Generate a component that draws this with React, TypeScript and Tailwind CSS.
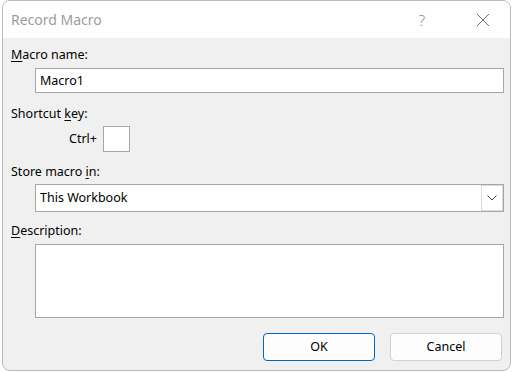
import React from "react";

const font = { fontFamily: '"Noto Sans", "Open Sans", sans-serif' };

function U({ children }: { children: React.ReactNode }) {
  return <span className="underline decoration-1 underline-offset-[2px]">{children}</span>;
}

export default function App() {
  return (
    <div className="w-[512px] h-[372px] bg-white overflow-hidden" style={font}>
      <div className="ml-[2px] w-[509px] h-[371px] rounded-[8px] border border-[#b9b9b9] bg-[#f0f0f0] overflow-hidden flex flex-col">
        {/* Title bar */}
        <div className="h-[37px] bg-white flex items-center shrink-0">
          <div className="pl-[8px] text-[14px] text-[#9c9c9c] leading-[20px] flex-1">Record Macro</div>
          <div className="w-[14px] text-[15px] leading-[20px] text-[#8a8a8a] text-center mr-[47px] font-light">?</div>
          <svg width="14" height="14" viewBox="0 0 14 14" className="mr-[20px]">
            <path d="M1 1 L13 13 M13 1 L1 13" stroke="#6e6e6e" strokeWidth="1" fill="none" />
          </svg>
        </div>

        {/* Body */}
        <div className="flex flex-col pl-[8px] pr-[6px] text-[12.5px] text-black leading-[16px]">
          <div className="mt-[9px] h-[16px]"><U>M</U>acro name:</div>
          <div className="mt-[5px] ml-[24px] h-[25px] bg-white border border-[#a6a6a6] flex items-center pl-[4px]">
            Macro1
          </div>

          <div className="mt-[13px] h-[16px]">Shortcut <U>k</U>ey:</div>
          <div className="mt-[4px] flex items-center h-[26px]">
            <span className="ml-[58px]">Ctrl+</span>
            <div className="ml-[6px] w-[27px] h-[26px] bg-white border border-[#a6a6a6]" />
          </div>

          <div className="mt-[12px] h-[16px]">Store macro <U>i</U>n:</div>
          <div className="mt-[4px] ml-[24px] h-[28px] bg-white border border-[#a6a6a6] flex items-stretch">
            <div className="flex-1 flex items-center pl-[4px]">This Workbook</div>
            <div className="w-[22px] border border-[#dadada] flex items-center justify-center">
              <svg width="10" height="6" viewBox="0 0 10 6">
                <path d="M0.5 0.5 L5 5 L9.5 0.5" stroke="#444" strokeWidth="1" fill="none" />
              </svg>
            </div>
          </div>

          <div className="mt-[11px] h-[16px]"><U>D</U>escription:</div>
          <div className="mt-[5px] ml-[24px] h-[74px] bg-white border border-[#a6a6a6]" />

          <div className="mt-[15px] mr-[2px] flex justify-end gap-[15px]">
            <button className="w-[112px] h-[28px] rounded-[4px] border border-[#0067c0] bg-[#fdfdfd] text-[12.5px] text-black">
              OK
            </button>
            <button className="w-[112px] h-[28px] rounded-[4px] border border-[#d0d0d0] bg-[#fdfdfd] text-[12.5px] text-black">
              Cancel
            </button>
          </div>
        </div>
      </div>
    </div>
  );
}
